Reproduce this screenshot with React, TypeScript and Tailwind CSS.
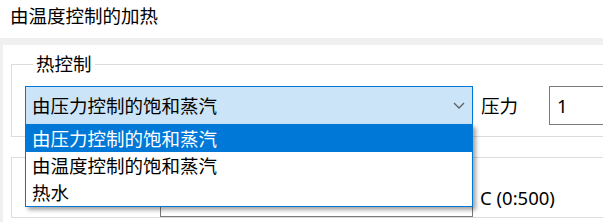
import React from "react";

const options = ["由压力控制的饱和蒸汽", "由温度控制的饱和蒸汽", "热水"];

function Chevron() {
  return (
    <svg width="12" height="7" viewBox="0 0 12 7" className="shrink-0">
      <path d="M1 1 L6 6 L11 1" fill="none" stroke="#606060" strokeWidth="1.3" />
    </svg>
  );
}

export default function App() {
  return (
    <div className="relative w-[603px] h-[222px] overflow-hidden bg-white text-[18.5px] leading-[20px] text-black font-['Noto_Sans','Noto_Sans_CJK_SC',sans-serif]">
      {/* Title */}
      <div className="h-[38px] pl-[10px] pt-[6px]">由温度控制的加热</div>

      {/* Page */}
      <div className="bg-[#f0f0f0] pt-[7px] pl-[3px] h-[184px]">
        <div className="bg-white h-full pl-[8px] pt-[9px]">
          {/* Heat control group */}
          <fieldset className="border border-[#dcdcdc] pl-[13px] pt-[12px] pb-[11px] w-[620px]">
            <legend className="ml-[8px] px-[3px]">热控制</legend>
            <div className="flex items-center">
              <div className="flex items-center justify-between w-[448px] h-[39px] border border-[#0078d7] bg-[#cce4f7] pl-[6px] pr-[7px]">
                <span>由压力控制的饱和蒸汽</span>
                <Chevron />
              </div>
              <span className="ml-[8px] w-[68px]">压力</span>
              <div className="flex items-center w-[80px] h-[39px] border border-[#7a7a7a] pl-[7px]">1</div>
            </div>
          </fieldset>

          {/* Temperature group (mostly hidden by the open list) */}
          <fieldset className="mt-[10px] border border-[#dcdcdc] pl-[13px] pt-[12px] w-[620px]">
            <legend className="ml-[8px] w-[46px] h-[20px]" />
            <div className="flex items-center">
              <div className="w-[135px]" />
              <div className="w-[313px] h-[38px] border border-[#7a7a7a] bg-white" />
              <span className="ml-[7px]">C (0:500)</span>
            </div>
          </fieldset>
        </div>
      </div>

      {/* Open dropdown list */}
      <div className="absolute left-[25px] top-[124px] w-[448px] border border-[#0078d7] bg-white shadow-[3px_3px_4px_rgba(0,0,0,0.35)]">
        {options.map((o, i) => (
          <div
            key={o}
            className={
              i === 0
                ? "h-[27px] flex items-center pl-[6px] bg-[#0078d7] text-white"
                : "h-[27px] flex items-center pl-[6px]"
            }
          >
            {o}
          </div>
        ))}
      </div>
    </div>
  );
}
